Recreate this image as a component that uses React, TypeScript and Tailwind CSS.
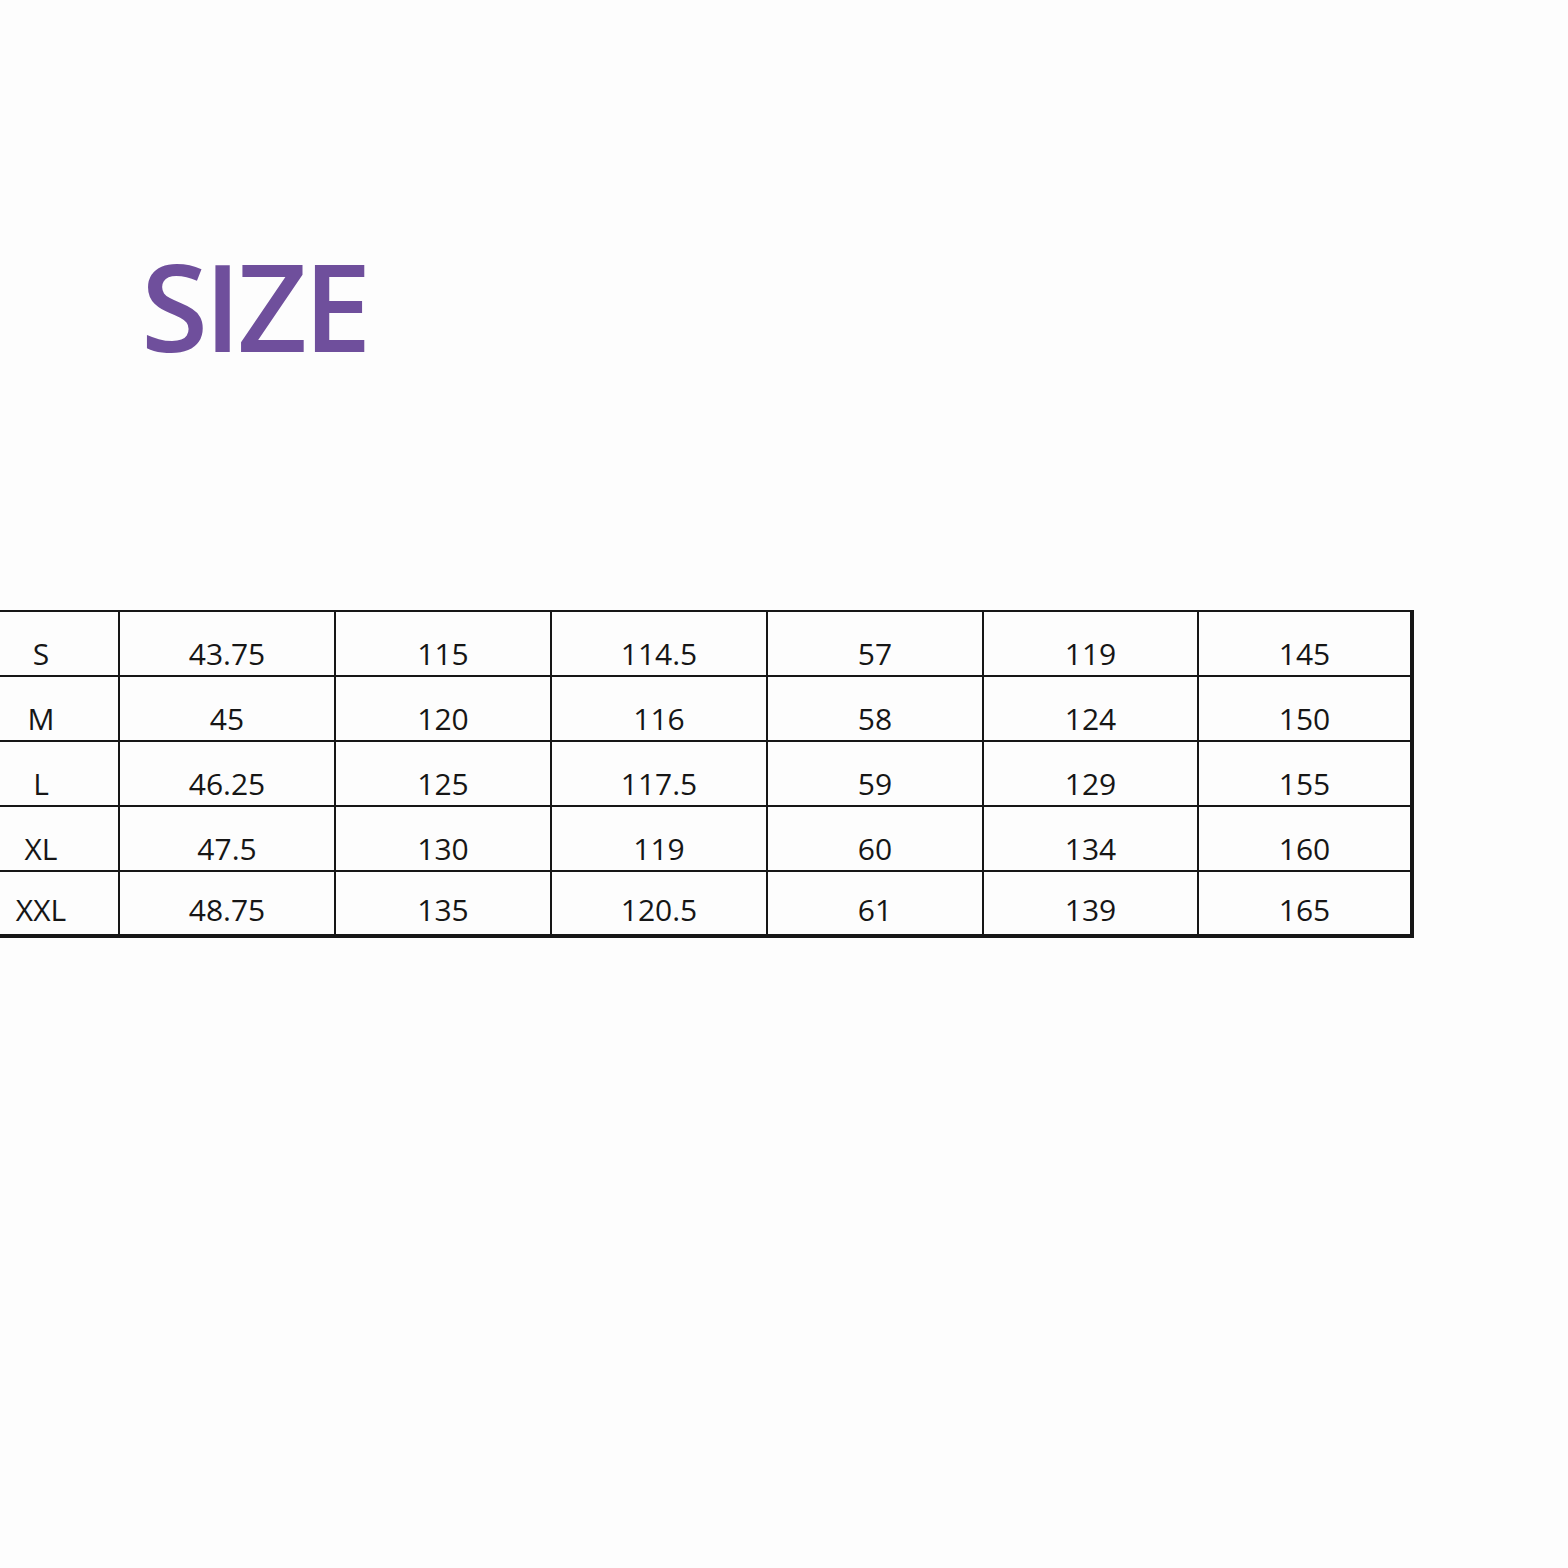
import React from 'react';

const rows: string[][] = [
  ['S', '43.75', '115', '114.5', '57', '119', '145'],
  ['M', '45', '120', '116', '58', '124', '150'],
  ['L', '46.25', '125', '117.5', '59', '129', '155'],
  ['XL', '47.5', '130', '119', '60', '134', '160'],
  ['XXL', '48.75', '135', '120.5', '61', '139', '165'],
];

const widths = ['w-[156px]', 'w-[216px]', 'w-[216px]', 'w-[216px]', 'w-[216px]', 'w-[215px]', 'w-[214px]'];

export default function App() {
  return (
    <div
      className="w-[1568px] h-[1568px] overflow-hidden bg-[#fdfdfd] pt-[244px]"
      style={{ fontFamily: '"Open Sans", "Noto Sans", sans-serif' }}
    >
      <h1 className="pl-[141px] text-[122px] leading-none font-semibold text-[#6f4f9c] tracking-[-4px]">
        SIZE
      </h1>

      <table className="mt-[244px] ml-[-38px] border-collapse table-fixed">
        <colgroup>
          {widths.map((w, i) => (
            <col key={i} className={w} />
          ))}
        </colgroup>
        <tbody>
          {rows.map((row, r) => (
            <tr key={row[0]} className="h-[65px]">
              {row.map((cell, c) => (
                <td
                  key={c}
                  className={
                    'border-2 border-[#161616] align-top text-center text-[30px] leading-[30px] font-medium text-[#161616] ' +
                    (c === 6 ? 'border-r-4 ' : '') +
                    (r === rows.length - 1 ? 'border-b-4 pt-[23px]' : 'pt-[27px]')
                  }
                >
                  {cell}
                </td>
              ))}
            </tr>
          ))}
        </tbody>
      </table>
    </div>
  );
}
